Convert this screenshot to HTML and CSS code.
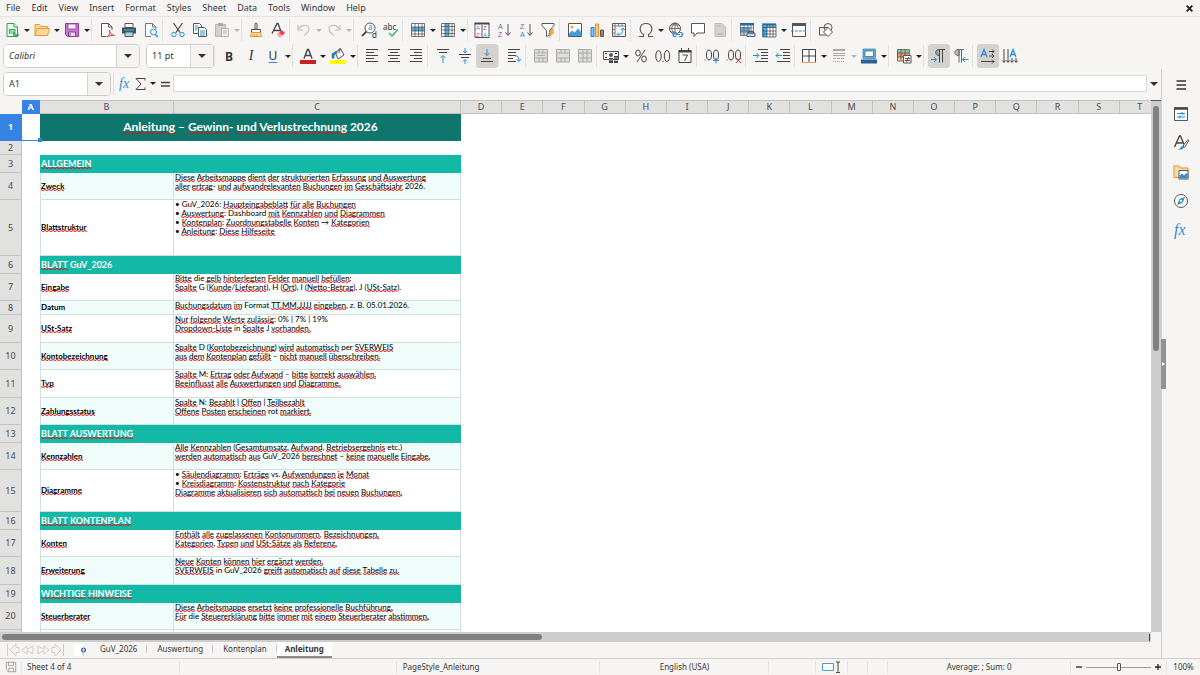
FILE: index.html
```html
<!DOCTYPE html>
<html lang="en">
<head>
<meta charset="utf-8">
<title>Anleitung</title>
<link rel="stylesheet" href="styles.css">
</head>
<body>
<nav class="menubar">
  <button>File</button><button>Edit</button><button>View</button><button>Insert</button><button>Format</button><button>Styles</button><button>Sheet</button><button>Data</button><button>Tools</button><button>Window</button><button>Help</button>
  <button class="close" aria-label="Close"><svg viewBox="0 0 8 8"><path d="M1.5 1.5l5 5M6.500 1.500l-5 5" stroke="#222" stroke-width="1.700"/></svg></button>
</nav>

<div class="toolbar" role="toolbar" aria-label="Standard">
  <button class="tool" aria-label="New"><svg viewBox="0 0 16 16"><path d="M3 1.500h7l3.500 3.500v9.500h-10.500z" fill="#eaf8ee" stroke="#2f9e4f"/><path d="M10 1.500v3.500h3.500" fill="#fff" stroke="#2f9e4f"/><path d="M5 7h6.500v5h-6.500z" fill="#43a963"/><path d="M6 9h4.500M6 11h3" stroke="#fff"/><path d="M9 13h6" stroke="#2f9e4f" stroke-width="1.500"/></svg></button><button class="drop" aria-label="New options"></button>
  <button class="tool" aria-label="Open"><svg viewBox="0 0 16 16"><path d="M1 13.500v-11h4.500l1.500 2h6.500v3" fill="#fbd9a0" stroke="#e99a35"/><path d="M1 13.500l2-7h12.500l-2 7z" fill="#fdd79b" stroke="#e99a35"/></svg></button><button class="drop" aria-label="Open options"></button>
  <button class="tool" aria-label="Save"><svg viewBox="0 0 16 16"><path d="M1.500 1.500h13v13h-11l-2-2z" fill="#c77ad0" stroke="#93389d"/><path d="M4 2h8v5h-8z" fill="#fff" stroke="#a14bab"/><path d="M4.500 10h7v4.500h-7z" fill="#f1e4f3" stroke="#93389d"/><path d="M6 11v3" stroke="#93389d"/></svg></button><button class="drop" aria-label="Save options"></button>
  <span class="sep"></span>
  <button class="tool" aria-label="Export as PDF"><svg viewBox="0 0 16 16" fill="none"><path d="M13 8v-3l-3.500-3.500h-7v13h5" fill="#fff" stroke="#555"/><path d="M9.500 1.500v3.500h3.500" stroke="#555"/><path d="M8 15c3-2 3-5 2.500-7c0 3 2 5 5 5.500c-3-.5-6 .5-7.500 1.500" stroke="#e0344a"/></svg></button>
  <button class="tool" aria-label="Print"><svg viewBox="0 0 16 16"><path d="M4 1.500h8v4h-8z" fill="#fff" stroke="#555"/><path d="M1 5.500h14v6h-14z" fill="#4c4c4c"/><path d="M3 8h10" stroke="#29a0dc" stroke-width="1.500"/><path d="M4 10h8v4.500h-8z" fill="#a7d6f1" stroke="#555"/></svg></button>
  <button class="tool" aria-label="Print Preview"><svg viewBox="0 0 16 16" fill="none"><path d="M8 14.500h-5.500v-13h7l3.500 3.500v2" fill="#fff" stroke="#777"/><path d="M9.500 1.500v3.500h3.500" stroke="#777"/><circle cx="10.500" cy="10" r="3" fill="#e9f5fc" stroke="#2f8fce"/><path d="M12.500 12.500l2.500 2.500" stroke="#2f8fce" stroke-width="1.500"/></svg></button>
  <span class="sep"></span>
  <button class="tool" aria-label="Cut"><svg viewBox="0 0 16 16" fill="none"><path d="M3.500 1l6.500 9.500M12.500 1l-6.500 9.500" stroke="#444" stroke-width="1.200"/><circle cx="4" cy="12.500" r="2.200" stroke="#2a8ed4"/><circle cx="12" cy="12.500" r="2.200" stroke="#2a8ed4"/></svg></button>
  <button class="tool" aria-label="Copy"><svg viewBox="0 0 16 16"><path d="M1.500 1.500h6l2 2v8h-8z" fill="#fff" stroke="#555"/><path d="M3 4h3M3 6h3M3 8h2" stroke="#2a8ed4"/><path d="M6.500 5.500h6l2 2v7h-8z" fill="#fff" stroke="#555"/><path d="M8 9h5M8 11h5M8 13h5" stroke="#2a8ed4"/></svg></button>
  <button class="tool" aria-label="Paste" disabled><svg viewBox="0 0 16 16"><path d="M1.500 2.500h10v12h-10z" fill="#d0d0ce" stroke="#b5b5b2"/><path d="M4 1h5v3h-5z" fill="#aaa"/><path d="M7.500 6.500h7v8h-7z" fill="#eee" stroke="#b5b5b2"/><path d="M9 9h4M9 11h4" stroke="#bbb"/></svg></button><button class="drop" aria-label="Paste options" disabled></button>
  <span class="sep narrow"></span>
  <button class="tool" aria-label="Clone Formatting"><svg viewBox="0 0 16 16"><path d="M7 1.500q1-1 2 0v5.500h-2z" fill="#fff" stroke="#555"/><path d="M3.500 7.500h9v3h-9z" fill="#fff" stroke="#555"/><path d="M3.500 10.500h9l1 4h-11z" fill="#fde0b0" stroke="#e8912c"/><path d="M6 14v-2M9 14v-2" stroke="#e8912c"/></svg></button>
  <button class="tool" aria-label="Clear Direct Formatting"><svg viewBox="0 0 16 16" fill="none"><path d="M2 11.500l5-10h1l3 8M4 8.500h6" stroke="#444" stroke-width="1.300"/><path d="M7 12.500l5-4.500 3 3-5 4.500z" fill="#e8414c"/><path d="M7 12.500l2-2 3 3-2 2z" fill="#f8a5aa"/></svg></button>
  <span class="sep narrow"></span>
  <button class="tool" aria-label="Undo" disabled><svg viewBox="0 0 16 16" fill="none"><path d="M2 3v5h5M2.500 7.500c3-6 11-5 10.500 0c0 2.500-3 4-5 6" stroke="#c3c3c0" stroke-width="1.200"/></svg></button><button class="drop" aria-label="Undo options" disabled></button>
  <button class="tool" aria-label="Redo" disabled><svg viewBox="0 0 16 16" fill="none"><path d="M14 3v5h-5M13.500 7.500c-3-6-11-5-10.500 0c0 2.500 3 4 5 6" stroke="#c3c3c0" stroke-width="1.200"/></svg></button><button class="drop" aria-label="Redo options" disabled></button>
  <span class="sep"></span>
  <button class="tool" aria-label="Find and Replace"><svg viewBox="0 0 16 16" fill="none"><circle cx="9" cy="6" r="5" fill="#fff" stroke="#555"/><path d="M5.500 9.500l-4.500 4.500" stroke="#333" stroke-width="1.700"/><text x="7" y="8" class="glyph blue">a</text><text x="11" y="16" class="glyph dark">d</text></svg></button>
  <button class="tool" aria-label="Spelling"><svg viewBox="0 0 16 16" fill="none"><text x="0" y="8" class="glyph dark">abc</text><path d="M6 11l3 3 6-6.500" stroke="#35ae60" stroke-width="1.300"/></svg></button>
  <span class="sep"></span>
  <button class="tool" aria-label="Row"><svg viewBox="0 0 16 16"><path d="M1.500 1.500h13v13h-13z" fill="#fff"/><path d="M1 5h14v4h-14z" fill="#4daee8"/><path d="M1.500 1.500h13v13h-13zM5 1.500v13M8.500 1.500v13M12 1.500v13M1.500 5h13M1.500 9h13M1.500 12h13" fill="none" stroke="#555" stroke-width=".8"/></svg></button><button class="drop" aria-label="Row options"></button>
  <button class="tool" aria-label="Column"><svg viewBox="0 0 16 16"><path d="M1.500 1.500h13v13h-13z" fill="#fff"/><path d="M5 1h4v14h-4z" fill="#4daee8"/><path d="M1.500 1.500h13v13h-13zM5 1.500v13M9 1.500v13M12 1.500v13M1.500 4.500h13M1.500 8h13M1.500 11.500h13" fill="none" stroke="#555" stroke-width=".8"/></svg></button><button class="drop" aria-label="Column options"></button>
  <span class="sep narrow"></span>
  <button class="tool" aria-label="Sort"><svg viewBox="0 0 16 16"><path d="M1 1.500h14v14h-14zM8 3v12" fill="#fff" stroke="#555"/><path d="M.5 1.500h15" stroke="#444" stroke-width="2"/><text x="2" y="8" class="letter blue">A</text><text x="2" y="15" class="letter plum">Z</text><text x="9" y="8" class="letter plum">Z</text><text x="9" y="15" class="letter blue">A</text></svg></button>
  <button class="tool" aria-label="Sort Ascending"><svg viewBox="0 0 16 16" fill="none"><text x="2" y="7" class="sorter blue">A</text><text x="2" y="15" class="sorter plum">Z</text><path d="M12 2v11M9.500 10.500l2.500 3 2.500-3" stroke="#555"/></svg></button>
  <button class="tool" aria-label="Sort Descending"><svg viewBox="0 0 16 16" fill="none"><text x="2" y="7" class="sorter plum">Z</text><text x="2" y="15" class="sorter blue">A</text><path d="M12 2v11M9.500 10.500l2.500 3 2.500-3" stroke="#555"/></svg></button>
  <button class="tool" aria-label="AutoFilter"><svg viewBox="0 0 16 16"><path d="M2 1.500h12v2l-4.500 5v4.500l-3 1.500v-6l-4.500-5z" fill="#fff" stroke="#555"/><path d="M11.500 7l-3 4.500h2l-1.500 4 5-5.500h-2l2-3z" fill="#f7a440" stroke="#e28822" stroke-width=".5"/></svg></button>
  <span class="sep"></span>
  <button class="tool" aria-label="Image"><svg viewBox="0 0 16 16"><path d="M1.500 1.500h13v13h-13z" fill="#fff" stroke="#555"/><circle cx="5" cy="5" r="1.500" fill="#f5a13c"/><path d="M2 14v-2.500l3-3 2.500 2 3.500-4 3.500 4v3.500z" fill="#3f9fdc"/></svg></button>
  <button class="tool" aria-label="Chart"><svg viewBox="0 0 16 16"><path d="M2 5.500h3v9h-3z" fill="#86c5ee" stroke="#2383c4"/><path d="M6.500 2h3v12.500h-3z" fill="#fbc786" stroke="#e8912c"/><path d="M11.500 8h3v6.500h-3z" fill="#9b8379" stroke="#6b5249"/></svg></button>
  <button class="tool" aria-label="Pivot Table"><svg viewBox="0 0 16 16" fill="none"><path d="M1.500 1.500h13v13h-13z" fill="#fff" stroke="#555"/><path d="M1.500 4h13M4 1.500v13M7.500 1.500v2.500M11 1.500v2.500M1.500 7.500h2.500M1.500 11h2.500" stroke="#777"/><path d="M6.500 12.500c4 .5 5.500-2 5.500-6M10 8l2-2 2 2M8 10.500l-2 2 2 2" stroke="#2a8ed4"/></svg></button>
  <span class="sep"></span>
  <button class="tool" aria-label="Special Character"><svg viewBox="0 0 16 16" fill="none"><path d="M1 14.500h4.500v-2c-5-3-4.500-11 2.500-11s7.500 8 2.500 11v2h4.500" stroke="#555" stroke-width="1.100"/></svg></button><button class="drop" aria-label="Character options"></button>
  <button class="tool" aria-label="Hyperlink"><svg viewBox="0 0 16 16" fill="none"><circle cx="7" cy="6.500" r="5.500" stroke="#555"/><path d="M1.500 6.500h11M7 1v9M3 3h8M3 10h4M7 1c-4 3-4 7-1 10M7 1c3 2 3 4 3 6" stroke="#555" stroke-width=".8"/><path d="M8.500 10.500h-2.500q-2 2 0 4h2.500M11 10.500h2.500q2 2 0 4h-2.500M8 12.500h4" stroke="#2a8ed4" stroke-width="1.200"/></svg></button>
  <button class="tool" aria-label="Comment"><svg viewBox="0 0 16 16"><path d="M1.500 1.500h13v9.500h-7.500l-3 3.500v-3.500h-2.500z" fill="#fff" stroke="#555"/></svg></button>
  <button class="tool" aria-label="Headers and Footers" disabled><svg viewBox="0 0 16 16"><path d="M3 1.500h7l3.500 3.500v9.500h-10.500z" fill="#d2d2cf" stroke="#bcbcb8"/><path d="M5 4h4M5 12h6" stroke="#b0b0ac"/></svg></button>
  <span class="sep"></span>
  <button class="tool" aria-label="Print Area"><svg viewBox="0 0 16 16"><path d="M1.500 1.500h13v12h-13z" fill="#fff"/><path d="M1 1h14v2.500h-14z" fill="#176fae"/><path d="M1 5h10v6h-10z" fill="#65b9ec"/><path d="M1.500 1.500h13v12h-13zM5 3v11M9 3v8M12 3v6M1.500 6h13M1.500 9h13M1.500 12h6" fill="none" stroke="#555" stroke-width=".7"/><path d="M8 11h8v3.500h-8zM9.500 9.500h5v1.500h-5z" fill="#b9ddf2" stroke="#444" stroke-width=".8"/></svg></button>
  <button class="tool" aria-label="Freeze Rows and Columns"><svg viewBox="0 0 16 16"><path d="M2.500 2.500h12v12h-12z" fill="#fff"/><path d="M1 1h5v14h-5zM1 1h14v4.500h-14z" fill="#4daee8"/><path d="M2 2.500h13v12.500h-13zM6 2v13M9 2v13M12 2v13M2 5.500h13M2 9h13M2 12h13" fill="none" stroke="#444" stroke-width=".7"/></svg></button><button class="drop" aria-label="Freeze options"></button>
  <button class="tool" aria-label="Split Window"><svg viewBox="0 0 16 16" fill="none"><path d="M1.500 1.500h13v13h-13z" fill="#fff" stroke="#555"/><path d="M1 2.500h14" stroke="#555" stroke-width="3"/><path d="M0 9h16" stroke="#2a8ed4" stroke-dasharray="3 1"/></svg></button>
  <span class="sep"></span>
  <button class="tool" aria-label="Draw Functions"><svg viewBox="0 0 16 16" fill="none" stroke="#555"><path d="M1.500 5.500h8v7.500h-8z"/><circle cx="10" cy="5.500" r="4"/><path d="M10 5.500l4.500 4.500-4.500 4.500-4.500-4.500z" fill="#fff"/></svg></button>
</div>

<div class="toolbar" role="toolbar" aria-label="Formatting">
  <div class="combo font"><input type="text" value="Calibri" aria-label="Font Name"><button class="open" aria-label="Font list"></button></div>
  <div class="combo size"><input type="text" value="11 pt" aria-label="Font Size"><button class="open" aria-label="Size list"></button></div>
  <span class="sep narrow"></span>
  <button class="tool bold">B</button>
  <button class="tool italic">I</button>
  <button class="tool under">U</button><button class="drop" aria-label="Underline options"></button>
  <span class="sep"></span>
  <button class="tool" aria-label="Font Color"><svg viewBox="0 0 16 16" fill="none"><path d="M4 10.500l3.500-9h1l3.500 9M5.500 7.500h5" stroke="#444" stroke-width="1.400"/><path d="M0 12h16v4h-16z" fill="#c9211e"/></svg></button><button class="drop" aria-label="Font Color options"></button>
  <button class="tool" aria-label="Background Color"><svg viewBox="0 0 16 16"><path d="M0 12h16v4h-16z" fill="#ff0"/><path d="M5 4l6-2.500 3 5.500-6 4z" fill="#fff" stroke="#555"/><path d="M9 5v-4q2-1.500 2 1" fill="none" stroke="#555"/><path d="M2 10.500c-1-5 0-7 5-6.500l1 1.500c-3 0-4 2-3.500 5z" fill="#2580be"/></svg></button><button class="drop" aria-label="Background options"></button>
  <span class="sep narrow"></span>
  <button class="tool" aria-label="Align Left"><svg viewBox="0 0 16 16" stroke="#444"><path d="M2 1.500h12M2 4.500h8M2 7.500h12M2 10.500h8M2 13.500h12"/></svg></button>
  <button class="tool" aria-label="Center Horizontally"><svg viewBox="0 0 16 16" stroke="#444"><path d="M2 1.500h12M4 4.500h8M2 7.500h12M4 10.500h8M2 13.500h12"/></svg></button>
  <button class="tool" aria-label="Align Right"><svg viewBox="0 0 16 16" stroke="#444"><path d="M2 1.500h12M6 4.500h8M2 7.500h12M6 10.500h8M2 13.500h12"/></svg></button>
  <span class="sep"></span>
  <button class="tool" aria-label="Align Top"><svg viewBox="0 0 16 16" fill="none" stroke="#444"><path d="M2 1.500h12M4 4.500h8"/><path d="M8 15v-7M5.500 10l2.500-2.500 2.500 2.500" stroke="#2a8ed4"/></svg></button>
  <button class="tool" aria-label="Center Vertically"><svg viewBox="0 0 16 16" fill="none" stroke="#444"><path d="M2 6.500h12M4 9.500h8"/><path d="M8 0v4.500M6 3l2 2 2-2M8 16v-4M6 13.500l2-2 2 2" stroke="#2a8ed4"/></svg></button>
  <button class="tool active" aria-label="Align Bottom"><svg viewBox="0 0 16 16" fill="none" stroke="#444"><path d="M4 10.500h8M2 13.500h12"/><path d="M8 1v6.500M5.500 5l2.500 2.500 2.500-2.500" stroke="#2a8ed4"/></svg></button>
  <span class="sep"></span>
  <button class="tool" aria-label="Wrap Text"><svg viewBox="0 0 16 16" fill="none" stroke="#444"><path d="M2 1.500h12M2 4.500h8M2 7.500h8M2 13.500h8M2 10.500h5"/><path d="M9 8q4-1 4 5M10.500 11l2.500 2.500 2-2.500" stroke="#2a8ed4"/></svg></button>
  <span class="sep"></span>
  <button class="tool" aria-label="Merge and Center" disabled><svg viewBox="0 0 16 16" stroke="#aaa" fill="#dededb"><path d="M1.500 1.500h13v12.500h-13zM1.500 5h13M1.500 10h13M6 1.500v3.500M10 1.500v3.500M6 10v4M10 10v4M4 7.500h8"/></svg></button>
  <button class="tool" aria-label="Merge Cells" disabled><svg viewBox="0 0 16 16" stroke="#aaa" fill="#dededb"><path d="M1.500 1.500h13v12.500h-13zM1.500 5h13M1.500 10h13M6 1.500v3.500M10 1.500v3.500M6 10v4M10 10v4"/></svg></button>
  <button class="tool" aria-label="Split Cells" disabled><svg viewBox="0 0 16 16" stroke="#aaa" fill="#dededb"><path d="M1.500 1.500h13v12.500h-13zM1.500 5h13M1.500 10h13M6 1.500v12.500M10 1.500v12.500"/></svg></button>
  <span class="sep narrow"></span>
  <button class="tool" aria-label="Format as Currency"><svg viewBox="0 0 16 16"><path d="M.5 3.500h15v8h-15z" fill="#f4f4f4" stroke="#555"/><path d="M2 5.500h2M12 5.500h2M2 9.500h2" stroke="#444"/><circle cx="8" cy="7" r="2" fill="#555"/><path d="M6 10h4v5h-4zM11 8h4v7h-4z" fill="#444"/><path d="M6 12h4M11 10h4M11 12.500h4" stroke="#eee" stroke-width=".7"/></svg></button><button class="drop" aria-label="Currency options"></button>
  <button class="tool" aria-label="Format as Percent"><svg viewBox="0 0 16 16" fill="none" stroke="#444"><ellipse cx="5" cy="5" rx="2.300" ry="3"/><ellipse cx="11" cy="11" rx="2.300" ry="3"/><path d="M12 2l-8 12"/></svg></button>
  <button class="tool" aria-label="Format as Number"><svg viewBox="0 0 16 16" fill="none" stroke="#444"><ellipse cx="3.500" cy="8" rx="2.700" ry="5.500"/><ellipse cx="12" cy="8" rx="2.700" ry="5.500"/><path d="M7.300 13.500h1.200"/></svg></button>
  <button class="tool" aria-label="Format as Date"><svg viewBox="0 0 16 16" fill="none" stroke="#444"><path d="M2 2.500h12v12h-12z" fill="#fff"/><path d="M1.500 3.500h13" stroke-width="2"/><path d="M4.500 0v3M11.500 0v3M5.500 7h5l-3 6"/></svg></button>
  <span class="sep"></span>
  <button class="tool" aria-label="Add Decimal Place"><svg viewBox="0 0 16 16" fill="none" stroke="#444"><ellipse cx="5" cy="7" rx="2.500" ry="5"/><ellipse cx="12" cy="7" rx="2.500" ry="5"/><path d="M.5 12h1"/><path d="M9 12.500h6M12 9.500v6" stroke="#2a8ed4"/></svg></button>
  <button class="tool" aria-label="Delete Decimal Place"><svg viewBox="0 0 16 16" fill="none" stroke="#444"><ellipse cx="5" cy="7" rx="2.500" ry="5"/><ellipse cx="12" cy="7" rx="2.500" ry="5"/><path d="M.5 12h1"/><path d="M10 10l5 5M15 10l-5 5" stroke="#e8303e"/></svg></button>
  <span class="sep"></span>
  <button class="tool" aria-label="Increase Indent"><svg viewBox="0 0 16 16" fill="none" stroke="#444"><path d="M5 1.500h10M8 4.500h7M8 7.500h7M8 10.500h7M2 13.500h13"/><path d="M0 7.500h6M3.500 5l2.500 2.500-2.500 2.500" stroke="#2a8ed4"/></svg></button>
  <button class="tool" aria-label="Decrease Indent"><svg viewBox="0 0 16 16" fill="none" stroke="#444"><path d="M5 1.500h10M8 4.500h7M8 7.500h7M8 10.500h7M2 13.500h13"/><path d="M1 7.500h6M3.500 5l-2.500 2.500 2.500 2.500" stroke="#2a8ed4"/></svg></button>
  <span class="sep narrow"></span>
  <button class="tool" aria-label="Borders"><svg viewBox="0 0 16 16" fill="#fff"><path d="M1.500 1.500h13v13h-13z" stroke="#e8a15a"/><path d="M14.500 14v-12.500h-13v12.500M8 2v12M2 8h12" stroke="#444" fill="none"/></svg></button><button class="drop" aria-label="Border options"></button>
  <button class="tool" aria-label="Border Style" disabled><svg viewBox="0 0 16 16" fill="none" stroke="#aaa"><path d="M2 2h12" stroke-width="2"/><path d="M2 5.500h12M2 7.500h12"/><path d="M2 10.500h12" stroke-dasharray="3 1"/><path d="M2 13.500h12" stroke-dasharray="1 1"/></svg></button><button class="drop" aria-label="Border Style options" disabled></button>
  <button class="tool" aria-label="Border Color"><svg viewBox="0 0 16 16"><path d="M2 1h12.500v9.500h-12.500z" fill="#63aede" stroke="#2a7fc0" stroke-width=".7"/><path d="M4 3h8.500v5.500h-8.500z" fill="#fff" stroke="#555" stroke-width=".7"/><path d="M0 11.500h16v4h-16z" fill="#2a6099"/></svg></button><button class="drop" aria-label="Border Color options"></button>
  <span class="sep"></span>
  <button class="tool" aria-label="Conditional"><svg viewBox="0 0 16 16"><path d="M1 1.500h12v3.500h-12z" fill="#8bc99b"/><path d="M1 5h12v4h-12z" fill="#f28b82"/><path d="M1 9h12v4h-12z" fill="#fbd180"/><path d="M1.500 1.500h12v11.500h-12zM5 1.500v11M9 1.500v11M1 5h12M1 9h12" fill="none" stroke="#555" stroke-width=".8"/><path d="M7.500 7.500h7.500v7.500h-7.500z" fill="#fff" stroke="#555"/><path d="M9 10.500h5M9 12.500h5M10 14l3-5" stroke="#333" stroke-width=".8"/></svg></button><button class="drop" aria-label="Conditional options"></button>
  <span class="sep"></span>
  <button class="tool active" aria-label="Left-To-Right"><svg viewBox="0 0 16 16" fill="none" stroke="#444"><path d="M8.500 1.500c-5 0-5 6 0 6z" fill="#aaa9a5"/><path d="M14 1.500h-5.500M8.500 1v13.500M11.500 1v13.500"/><path d="M0 11.500h5M3 9l2.500 2.500-2.500 2.500" stroke="#2a8ed4"/></svg></button>
  <button class="tool" aria-label="Right-To-Left"><svg viewBox="0 0 16 16" fill="none" stroke="#666"><path d="M6 1.500h-.5c-5 0-5 6 0 6h.5z" fill="#bbb"/><path d="M6 1.500h5M6 1v13.500M8.500 1v13.500"/><path d="M9.500 11.500h6M12 9l-2.500 2.500 2.500 2.500" stroke="#2a8ed4"/></svg></button>
  <span class="sep"></span>
  <button class="tool active" aria-label="Text left to right"><svg viewBox="0 0 16 16" fill="none" stroke="#444"><path d="M1 9l3-7.500 3 7.500M2 6.500h4" stroke="#2a8ed4" stroke-width="1.300"/><path d="M9 3.500h5M9 8h5M1 13.500h13M12 1.500l2 2-2 2M12 6l2 2-2 2M12 11.500l2 2-2 2"/></svg></button>
  <button class="tool" aria-label="Text top to bottom"><svg viewBox="0 0 16 16" fill="none" stroke="#444"><path d="M8 9l3-7.500 3 7.500M9 6.500h4" stroke="#2a8ed4" stroke-width="1.300"/><path d="M2 1v13M6 1v13M10 10v4M14 10v4M.5 12.500l1.500 2 1.500-2M4.500 12.500l1.500 2 1.500-2M8.500 12.500l1.500 2 1.500-2M12.500 12.500l1.500 2 1.500-2"/></svg></button>
</div>

<div class="workspace">
  <main class="editor">
    <div class="formula">
      <div class="combo name"><input type="text" value="A1" aria-label="Name Box"><button class="open" aria-label="Name list"></button></div>
      <span class="sep narrow"></span>
      <button class="fx" aria-label="Function Wizard"><svg viewBox="0 0 16 16"><text x="2" y="12" class="func">fx</text></svg></button>
      <button class="sum" aria-label="Select Function"><svg viewBox="0 0 16 16" fill="none"><path d="M12 4.500v-2h-9l5 5.500-5 5.500h9v-2" stroke="#444"/></svg></button><button class="drop" aria-label="Function options"></button>
      <button class="equals" aria-label="Formula"><svg viewBox="0 0 16 16"><path d="M4 6.500h9M4 10h9" stroke="#444" stroke-width="1.500"/></svg></button>
      <input class="line" type="text" aria-label="Input line">
      <button class="open expand" aria-label="Expand Formula Bar"></button>
    </div>
    <div class="grid">
      <div class="sheet">
        <table>
          <colgroup><col class="c-num"><col class="c-a"><col class="c-b"><col class="c-c"><col span="17"></colgroup>
          <thead><tr><th class="corner"></th><th class="sel">A</th><th>B</th><th>C</th><th>D</th><th>E</th><th>F</th><th>G</th><th>H</th><th>I</th><th>J</th><th>K</th><th>L</th><th>M</th><th>N</th><th>O</th><th>P</th><th>Q</th><th>R</th><th>S</th><th>T</th></tr></thead>
          <tbody>
            <tr class="h27"><th class="sel">1</th><td class="cursor"></td><td class="title" colspan="2"><u>Anleitung</u> – <u>Gewinn</u>- <u>und</u> <u>Verlustrechnung</u> 2026</td></tr>
            <tr class="h14"><th>2</th></tr>
            <tr class="h18"><th>3</th><td></td><td class="section" colspan="2"><u>ALLGEMEIN</u></td></tr>
            <tr class="h27 tint"><th>4</th><td></td><td class="label"><u>Zweck</u></td><td class="text"><u>Diese</u> <u>Arbeitsmappe</u> <u>dient</u> <u>der</u> <u>strukturierten</u> <u>Erfassung</u> <u>und</u> <u>Auswertung</u><br><u>aller</u> <u>ertrag</u>- <u>und</u> <u>aufwandrelevanten</u> <u>Buchungen</u> <u>im</u> <u>Geschäftsjahr</u> 2026.</td></tr>
            <tr class="h56"><th>5</th><td></td><td class="label"><u>Blattstruktur</u></td><td class="text">• GuV_2026: <u>Haupteingabeblatt</u> <u>für</u> <u>alle</u> <u>Buchungen</u><br>• <u>Auswertung</u>: Dashboard <u>mit</u> <u>Kennzahlen</u> <u>und</u> <u>Diagrammen</u><br>• <u>Kontenplan</u>: <u>Zuordnungstabelle</u> <u>Konten</u> → <u>Kategorien</u><br>• <u>Anleitung</u>: <u>Diese</u> <u>Hilfeseite</u></td></tr>
            <tr class="h18"><th>6</th><td></td><td class="section" colspan="2"><u>BLATT</u> GuV_2026</td></tr>
            <tr class="h27"><th>7</th><td></td><td class="label"><u>Eingabe</u></td><td class="text"><u>Bitte</u> die <u>gelb</u> <u>hinterlegten</u> <u>Felder</u> <u>manuell</u> <u>befüllen</u>:<br><u>Spalte</u> G (<u>Kunde</u>/<u>Lieferant</u>), H (<u>Ort</u>), I (<u>Netto-Betrag</u>), J (<u>USt-Satz</u>).</td></tr>
            <tr class="h14 tint"><th>8</th><td></td><td class="label">Datum</td><td class="text"><u>Buchungsdatum</u> <u>im</u> Format <u>TT.MM.JJJJ</u> <u>eingeben</u>, z. B. 05.01.2026.</td></tr>
            <tr class="h28"><th>9</th><td></td><td class="label"><u>USt-Satz</u></td><td class="text"><u>Nur</u> <u>folgende</u> <u>Werte</u> <u>zulässig</u>: 0% | 7% | 19%<br><u>Dropdown-Liste</u> in <u>Spalte</u> J <u>vorhanden.</u></td></tr>
            <tr class="h27 tint"><th>10</th><td></td><td class="label"><u>Kontobezeichnung</u></td><td class="text"><u>Spalte</u> D (<u>Kontobezeichnung</u>) <u>wird</u> <u>automatisch</u> per <u>SVERWEIS</u><br><u>aus</u> <u>dem</u> <u>Kontenplan</u> <u>gefüllt</u> – <u>nicht</u> <u>manuell</u> <u>überschreiben.</u></td></tr>
            <tr class="h28"><th>11</th><td></td><td class="label"><u>Typ</u></td><td class="text"><u>Spalte</u> M: <u>Ertrag</u> <u>oder</u> <u>Aufwand</u> – <u>bitte</u> <u>korrekt</u> <u>auswählen.</u><br><u>Beeinflusst</u> <u>alle</u> <u>Auswertungen</u> <u>und</u> <u>Diagramme.</u></td></tr>
            <tr class="h27 tint"><th>12</th><td></td><td class="label"><u>Zahlungsstatus</u></td><td class="text"><u>Spalte</u> N: <u>Bezahlt</u> | <u>Offen</u> | <u>Teilbezahlt</u><br><u>Offene</u> <u>Posten</u> <u>erscheinen</u> rot <u>markiert.</u></td></tr>
            <tr class="h18"><th>13</th><td></td><td class="section" colspan="2"><u>BLATT</u> <u>AUSWERTUNG</u></td></tr>
            <tr class="h27 tint"><th>14</th><td></td><td class="label"><u>Kennzahlen</u></td><td class="text"><u>Alle</u> <u>Kennzahlen</u> (<u>Gesamtumsatz</u>, <u>Aufwand</u>, <u>Betriebsergebnis</u> etc.)<br><u>werden</u> <u>automatisch</u> <u>aus</u> GuV_2026 <u>berechnet</u> – <u>keine</u> <u>manuelle</u> <u>Eingabe.</u></td></tr>
            <tr class="h42"><th>15</th><td></td><td class="label"><u>Diagramme</u></td><td class="text">• <u>Säulendiagramm</u>: <u>Erträge</u> vs. <u>Aufwendungen</u> <u>je</u> <u>Monat</u><br>• <u>Kreisdiagramm</u>: <u>Kostenstruktur</u> <u>nach</u> <u>Kategorie</u><br><u>Diagramme</u> <u>aktualisieren</u> <u>sich</u> <u>automatisch</u> <u>bei</u> <u>neuen</u> <u>Buchungen.</u></td></tr>
            <tr class="h18"><th>16</th><td></td><td class="section" colspan="2"><u>BLATT</u> <u>KONTENPLAN</u></td></tr>
            <tr class="h27"><th>17</th><td></td><td class="label"><u>Konten</u></td><td class="text"><u>Enthält</u> <u>alle</u> <u>zugelassenen</u> <u>Kontonummern</u>, <u>Bezeichnungen,</u><br><u>Kategorien</u>, <u>Typen</u> <u>und</u> <u>USt-Sätze</u> <u>als</u> <u>Referenz.</u></td></tr>
            <tr class="h28 tint"><th>18</th><td></td><td class="label"><u>Erweiterung</u></td><td class="text"><u>Neue</u> <u>Konten</u> <u>können</u> <u>hier</u> <u>ergänzt</u> <u>werden.</u><br><u>SVERWEIS</u> in GuV_2026 <u>greift</u> <u>automatisch</u> <u>auf</u> <u>diese</u> <u>Tabelle</u> <u>zu.</u></td></tr>
            <tr class="h18"><th>19</th><td></td><td class="section" colspan="2"><u>WICHTIGE</u> <u>HINWEISE</u></td></tr>
            <tr class="h27 tint"><th>20</th><td></td><td class="label"><u>Steuerberater</u></td><td class="text"><u>Diese</u> <u>Arbeitsmappe</u> <u>ersetzt</u> <u>keine</u> <u>professionelle</u> <u>Buchführung.</u><br><u>Für</u> die <u>Steuererklärung</u> <u>bitte</u> <u>immer</u> <u>mit</u> <u>einem</u> <u>Steuerberater</u> <u>abstimmen.</u></td></tr>
            <tr class="h27"><th></th><td></td><td class="label"></td><td class="text"></td></tr>
          </tbody>
        </table>
      </div>
      <div class="vscroll"><div class="thumb"></div></div>
      <div class="hscroll"><div class="thumb"></div><span class="tick"></span></div>
    </div>
    <div class="tabs">
      <div class="pager">
        <button aria-label="First sheet"><svg viewBox="0 0 14 14"><path d="M1.500 1v12M4 7l6-6v3.500h3v5h-3v3.500z"/></svg></button>
        <button aria-label="Previous sheet"><svg viewBox="0 0 14 14"><path d="M1 7l5-4v3h1l5-3v8l-5-3h-1v3z"/></svg></button>
        <button aria-label="Next sheet"><svg viewBox="0 0 14 14"><path d="M13 7l-5-4v3h-1l-5-3v8l5-3h1v3z"/></svg></button>
        <button aria-label="Last sheet"><svg viewBox="0 0 14 14"><path d="M12.500 1v12M10 7l-6-6v3.500h-3v5h3v3.500z"/></svg></button>
      </div>
      <button class="add" aria-label="Add sheet"><svg viewBox="0 0 14 14"><path d="M1 1h9v12h-9z" fill="#fff"/><path d="M10 9.500v3.500" stroke="#bbb"/><circle cx="10.500" cy="7" r="2.500" fill="#3f69b0"/><path d="M9 7h3M10.500 5.500v3" stroke="#fff" stroke-width=".8"/></svg></button>
      <button class="tab">GuV_2026</button><button class="tab">Auswertung</button><button class="tab">Kontenplan</button><button class="tab current">Anleitung</button>
    </div>
  </main>
  <aside class="sidebar">
    <button aria-label="Sidebar Settings"><svg viewBox="0 0 16 16" stroke="#333" stroke-width="1.500"><path d="M3.500 4h9.500M3.500 8h9.500M3.500 12h9.500"/></svg></button>
    <button aria-label="Properties"><svg viewBox="0 0 16 16" fill="none"><path d="M1.500 2h13v12.500h-13z" fill="#fff" stroke="#555"/><path d="M1 2.500h14" stroke="#444" stroke-width="2.500"/><path d="M4 7.500h8M4 11h8M7 9.500v3" stroke="#2a8ed4"/><path d="M9 6v3" stroke="#2a8ed4"/></svg></button>
    <button aria-label="Styles"><svg viewBox="0 0 16 16" fill="none"><path d="M1.500 12l5-11h1l3.500 8.500M3.500 8h6" stroke="#444" stroke-width="1.400"/><path d="M10 11l5-6.500q1 .5.500 1.500l-4 6.500z" fill="#fff" stroke="#555"/><path d="M4 14.500q3 0 4-2.500 2-2 3 0 0 3-7 2.500z" fill="#2a8ed4"/></svg></button>
    <button aria-label="Gallery"><svg viewBox="0 0 16 16"><path d="M1 13.500v-11.500h5l1.500 2h7.500v9.500z" fill="#fddcae" stroke="#e8912c"/><path d="M6 6.500h9v8.500h-9z" fill="#fff" stroke="#555"/><path d="M6.500 14.500v-3l2.500-2 2 2 2.500-2.500 1 1v4.500z" fill="#318fce"/></svg></button>
    <button aria-label="Navigator"><svg viewBox="0 0 16 16"><circle cx="8" cy="8" r="6.500" fill="#fff" stroke="#555"/><path d="M12 4l-2.500 6-5.500 2 2.500-6z" fill="#2a8ed4"/><circle cx="8" cy="8" r="1.200" fill="#fff"/></svg></button>
    <button aria-label="Functions"><svg viewBox="0 0 16 16"><text x="1" y="13" class="func big">fx</text></svg></button>
    <button class="grip" aria-label="Hide sidebar"></button>
  </aside>
</div>

<footer class="status">
  <span class="s-save"><svg viewBox="0 0 14 14" fill="none" stroke="#999"><path d="M1.500 1.500h11v11h-9l-2-2zM4 1.500v4h6v-4M4.500 12.500v-4h5.500v4"/></svg></span>
  <span class="s-sheet">Sheet 4 of 4</span>
  <span class="s-blank"></span>
  <span class="s-page">PageStyle_Anleitung</span>
  <span class="s-lang">English (USA)</span>
  <span class="s-gap"></span>
  <span class="s-mode"><svg viewBox="0 0 22 12" fill="none"><path d="M1.500 2.500h11v7h-11z" fill="#fff" stroke="#4a9bd0"/><path d="M15 1h4M15 11.500h4M17 1v10" stroke="#444"/></svg></span>
  <span class="s-small"></span>
  <span class="s-small"></span>
  <span class="s-sum">Average: ; Sum: 0</span>
  <span class="s-zoom"><button aria-label="Zoom out"><svg viewBox="0 0 8 8"><path d="M1 4h6" stroke="#222" stroke-width="1.300"/></svg></button><input type="range" min="0" max="100" value="50" aria-label="Zoom"><button aria-label="Zoom in"><svg viewBox="0 0 8 8"><path d="M1 4h6M4 1v6" stroke="#222" stroke-width="1.300"/></svg></button></span>
  <span class="s-percent">100%</span>
</footer>
</body>
</html>
```
FILE: styles.css
```css
* { box-sizing: border-box; }
body {
  margin: 0;
  height: 100vh;
  display: flex;
  flex-direction: column;
  overflow: hidden;
  background: #f6f5f4;
  color: #353535;
  font: 9px/12px "Noto Sans", "Open Sans", sans-serif;
}
button {
  font: inherit;
  color: inherit;
  background: none;
  border: 0;
  padding: 0;
  margin: 0;
}
input { font: inherit; color: inherit; border: 0; padding: 0; min-width: 0; border-radius: 0; }
svg { display: block; overflow: visible; }

.menubar {
  flex: none;
  display: flex;
  gap: 11px;
  height: 17px;
  padding: 0 6px;
  border-bottom: 1px solid #e6e4e2;
}
.close { margin-left: auto; }
.close svg { width: 9px; height: 9px; }

.toolbar {
  flex: none;
  display: flex;
  align-items: center;
  height: 26px;
  padding-left: 1px;
}
.tool {
  flex: none;
  display: flex;
  align-items: center;
  justify-content: center;
  width: 22px;
  height: 24px;
  border-radius: 3px;
}
.tool svg { width: 16px; height: 16px; }
.tool.active { background: #d5d2ce; }
.drop { flex: none; width: 8px; height: 24px; display: flex; align-items: center; justify-content: center; }
.drop::after { content: ""; border: 3px solid transparent; border-top-color: #222; border-bottom: 0; }
.drop:disabled::after { border-top-color: #b5b5b2; }
.sep { flex: none; width: 5px; height: 22px; border-left: 1px solid #e2e0dd; margin: 0; }
.sep.narrow { width: 4px; }
.glyph { font: 8px "Noto Sans", sans-serif; }
.letter { font: 6px "Liberation Sans", sans-serif; }
.sorter { font: 7px "Liberation Sans", sans-serif; }
.func { font: italic 14px "Liberation Serif", serif; fill: #2a8ed4; }
.func.big { font-size: 16px; }
.blue { fill: #1f86cf; }
.plum { fill: #b044b8; }
.dark { fill: #333; }
.bold { font: bold 12px "Noto Sans", sans-serif; }
.italic { font: italic 14px "Liberation Serif", serif; }
.under { font-size: 12px; text-decoration: underline; text-decoration-color: #2a8ed4; text-underline-offset: 2px; }

.combo {
  flex: none;
  display: flex;
  height: 24px;
  border: 1px solid #d0cdc9;
  border-radius: 4px;
  background: #fff;
  overflow: hidden;
}
.combo input { flex: 1; padding-left: 5px; background: #fff; }
.open { flex: none; width: 23px; display: flex; align-items: center; justify-content: center; }
.open::after { content: ""; border: 4px solid transparent; border-top-color: #333; border-bottom: 0; }
.combo .open { background: #f4f3f1; border-left: 1px solid #d8d5d1; }
.combo.font { width: 137px; margin: 0 6px 0 2px; font-style: italic; }
.combo.size { width: 68px; }
.combo.name { width: 108px; margin-right: 2px; }

.workspace { flex: 1; display: flex; min-height: 0; }
.editor { flex: 1; min-width: 0; display: flex; flex-direction: column; }
.formula {
  flex: none;
  display: flex;
  align-items: center;
  height: 31px;
  padding: 0 0 2px 3px;
}
.fx, .sum, .equals { flex: none; width: 16px; }
.fx svg, .sum svg, .equals svg { width: 16px; height: 16px; }
.formula .line { flex: 1; height: 17px; border: 1px solid #dcdad7; background: #fff; }
.open.expand { width: 14px; }

.grid {
  flex: 1;
  min-height: 0;
  display: grid;
  grid-template: minmax(0, 1fr) 10px / minmax(0, 1fr) 10px;
}
.sheet { overflow: hidden; background: #fff; }
table { border-collapse: separate; border-spacing: 0; table-layout: fixed; width: calc(100% + 10px); }
.c-num { width: 22px; }
.c-a { width: 18px; }
.c-b { width: 134px; }
.c-c { width: 287px; }
td, th { padding: 0; }
th {
  background: #e1e1df;
  border: solid #c2c2c0;
  border-width: 0 1px 1px 0;
  font-weight: normal;
  line-height: 10px;
  color: #4a4a4a;
}
thead th { height: 14px; border-top-width: 1px; }
th.corner { background: #f6f5f4; border-color: #f6f5f4; }
th.sel { background: #3584e4; border-color: #3584e4; color: #fff; font-weight: bold; }
.h14 { height: 14px; }
.h18 { height: 18px; }
.h27 { height: 27px; }
.h28 { height: 28px; }
.h42 { height: 42px; }
.h56 { height: 56px; }
td { font: 8px/9px Lato, "Open Sans", sans-serif; color: #000; white-space: nowrap; }
.cursor { position: relative; border-bottom: 1px solid #3584e4; }
.cursor::after {
  content: "";
  position: absolute;
  right: -2px;
  bottom: -2px;
  width: 4px;
  height: 4px;
  background: #3584e4;
  z-index: 1;
}
.title { background: #0f766e; color: #fff; text-align: center; font-size: 12px; font-weight: bold; line-height: 14px; padding-bottom: 2px; }
.section { background: #14b8a6; color: #fff; font-size: 9px; font-weight: bold; padding: 0 0 2px 1px; }
.label, .text { border: solid #d3dfdd; border-width: 0 1px 1px 0; padding-left: 1px; }
.label { font-weight: bold; border-left-width: 1px; padding-left: 0; }
.text { vertical-align: top; }
.tint .label, .tint .text { background-color: #f0fdfa; }
u {
  text-decoration: none;
  background: url("data:image/svg+xml,%3Csvg xmlns='http://www.w3.org/2000/svg' width='4' height='2'%3E%3Cpath d='M0 .5L2 1.500L4 .5' fill='none' stroke='%23e01010' stroke-width='1'/%3E%3C/svg%3E") repeat-x left bottom;
}

.vscroll { background: #cdcdcd; padding: 5px 2px; border-top: 1px solid #555; }
.vscroll .thumb { height: 47%; border-radius: 3px; background: #808080; }
.hscroll { display: flex; align-items: center; justify-content: space-between; background: #cdcdcd; padding: 0 1px 0 2px; }
.hscroll .thumb { width: 47%; height: 6px; border-radius: 3px; background: #808080; }
.tick { width: 1px; height: 7px; background: #444; }

.tabs { flex: none; display: flex; height: 17px; border-bottom: 1px solid #d0cecb; padding-left: 6px; font-size: 8px; }
.pager { display: flex; align-items: center; gap: 1px; width: 67px; }
.pager svg { width: 14px; height: 14px; fill: none; stroke: #cfcdca; }
.add { width: 17px; }
.add svg { width: 14px; height: 14px; }
.tab { position: relative; padding: 0 10px 2px; }
.tab::after { content: ""; position: absolute; right: 0; top: 3px; width: 1px; height: 8px; background: #c8c6c3; }
.tab.current { background: #fff; border-bottom: 2px solid #8a8a8a; font-weight: bold; padding: 0 8px; }
.tab.current::after { content: none; }

.sidebar {
  position: relative;
  flex: none;
  width: 39px;
  display: flex;
  flex-direction: column;
  align-items: center;
  gap: 13px;
  padding-top: 8px;
  border-left: 1px solid #d0cecb;
  border-bottom: 1px solid #d0cecb;
}
.sidebar svg { width: 16px; height: 16px; }
.grip {
  position: absolute;
  left: -1px;
  top: 270px;
  width: 5px;
  height: 50px;
  background: #929292;
}
.grip::after { content: ""; display: block; margin-left: 1px; border: 2px solid transparent; border-left: 3px solid #fff; border-right: 0; width: 0; }

.status { flex: none; display: flex; align-items: center; height: 16px; font-size: 8px; }
.status > span {
  flex: none;
  height: 13px;
  display: flex;
  align-items: center;
  justify-content: center;
  border-right: 1px solid #e4e2df;
}
.status .s-save { width: 22px; }
.s-save svg { width: 12px; height: 12px; }
.status .s-sheet { flex: 158 0 0; justify-content: flex-start; text-indent: 5px; }
.status .s-blank { flex: 217 0 0; }
.status .s-page { flex: 204 0 0; justify-content: flex-start; text-indent: 6px; }
.status .s-lang { flex: 169 0 0; }
.status .s-gap { flex: 46 0 0; }
.status .s-mode { width: 32px; }
.s-mode svg { width: 22px; height: 12px; }
.status .s-small { width: 20px; }
.status .s-sum { flex: 183 0 0; }
.status .s-zoom { width: 96px; gap: 3px; }
.s-zoom svg { width: 8px; height: 8px; }
.status .s-percent { width: 33px; border-right: 0; }
input[type="range"] { appearance: none; width: 65px; height: 10px; margin: 0; background: linear-gradient(#999, #999) center / 100% 1px no-repeat; }
input[type="range"]::-webkit-slider-thumb { appearance: none; width: 4px; height: 8px; border: 1px solid #555; background: #f6f5f4; border-radius: 1px; }
```
